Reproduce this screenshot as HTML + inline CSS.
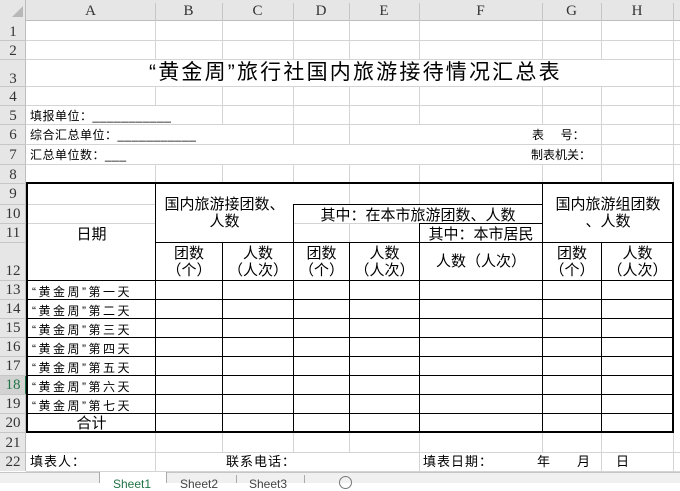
<!DOCTYPE html>
<html><head><meta charset="utf-8"><style>
*{margin:0;padding:0;box-sizing:border-box}
body{width:680px;height:483px;overflow:hidden;background:#fff;position:relative;font-family:"Liberation Sans","Noto Sans CJK SC",sans-serif;color:#000}
div{position:absolute}
.g{background:#d4d4d4}
.k{background:#000}
.t{font-size:12px;line-height:14px;white-space:nowrap}
.rh{left:0;width:26px;text-align:center;font-family:"Liberation Serif","Noto Serif CJK SC",serif;font-size:15px;color:#333}
.ch{top:0;height:21px;text-align:center;font-family:"Liberation Serif",serif;font-size:15px;line-height:22px;color:#333}
.b14{font-size:15px;line-height:17px;white-space:nowrap;text-align:center}
</style></head><body>
<div style="left:0;top:0;width:680px;height:21px;background:#e6e6e6;border-bottom:1px solid #bdbdbd"></div>
<div style="left:0;top:0;width:26px;height:471px;background:#e6e6e6;border-right:1px solid #bdbdbd"></div>
<div style="left:12px;top:6px;width:0;height:0;border-left:11px solid transparent;border-bottom:11px solid #b8b8b8"></div>
<div class="ch" style="left:26px;width:129px">A</div>
<div class="ch" style="left:155px;width:67px">B</div>
<div class="ch" style="left:222px;width:71px">C</div>
<div class="ch" style="left:293px;width:56px">D</div>
<div class="ch" style="left:349px;width:70px">E</div>
<div class="ch" style="left:419px;width:123px">F</div>
<div class="ch" style="left:542px;width:59px">G</div>
<div class="ch" style="left:601px;width:72px">H</div>
<div style="left:155px;top:3px;width:1px;height:18px;background:#c6c6c6"></div>
<div style="left:222px;top:3px;width:1px;height:18px;background:#c6c6c6"></div>
<div style="left:293px;top:3px;width:1px;height:18px;background:#c6c6c6"></div>
<div style="left:349px;top:3px;width:1px;height:18px;background:#c6c6c6"></div>
<div style="left:419px;top:3px;width:1px;height:18px;background:#c6c6c6"></div>
<div style="left:542px;top:3px;width:1px;height:18px;background:#c6c6c6"></div>
<div style="left:601px;top:3px;width:1px;height:18px;background:#c6c6c6"></div>
<div style="left:673px;top:3px;width:1px;height:18px;background:#c6c6c6"></div>
<div class="rh" style="top:22px;line-height:20px">1</div>
<div class="rh" style="top:41px;line-height:20px">2</div>
<div class="rh" style="top:69px;line-height:20px">3</div>
<div class="rh" style="top:87px;line-height:20px">4</div>
<div class="rh" style="top:106px;line-height:20px">5</div>
<div class="rh" style="top:125px;line-height:20px">6</div>
<div class="rh" style="top:145px;line-height:20px">7</div>
<div class="rh" style="top:165px;line-height:20px">8</div>
<div class="rh" style="top:184px;line-height:20px">9</div>
<div class="rh" style="top:204px;line-height:20px">10</div>
<div class="rh" style="top:223px;line-height:20px">11</div>
<div class="rh" style="top:261px;line-height:20px">12</div>
<div class="rh" style="top:280px;line-height:20px">13</div>
<div class="rh" style="top:299px;line-height:20px">14</div>
<div class="rh" style="top:318px;line-height:20px">15</div>
<div class="rh" style="top:337px;line-height:20px">16</div>
<div class="rh" style="top:356px;line-height:20px">17</div>
<div class="rh" style="top:375px;line-height:20px;color:#217346;background:#d2d2d2">18</div>
<div style="left:25px;top:376px;width:2px;height:18px;background:#217346"></div>
<div class="rh" style="top:394px;line-height:20px">19</div>
<div class="rh" style="top:413px;line-height:20px">20</div>
<div class="rh" style="top:433px;line-height:20px">21</div>
<div class="rh" style="top:452px;line-height:20px">22</div>
<div style="left:0;top:40px;width:26px;height:1px;background:#c6c6c6"></div>
<div style="left:0;top:59px;width:26px;height:1px;background:#c6c6c6"></div>
<div style="left:0;top:86px;width:26px;height:1px;background:#c6c6c6"></div>
<div style="left:0;top:105px;width:26px;height:1px;background:#c6c6c6"></div>
<div style="left:0;top:124px;width:26px;height:1px;background:#c6c6c6"></div>
<div style="left:0;top:144px;width:26px;height:1px;background:#c6c6c6"></div>
<div style="left:0;top:164px;width:26px;height:1px;background:#c6c6c6"></div>
<div style="left:0;top:183px;width:26px;height:1px;background:#c6c6c6"></div>
<div style="left:0;top:204px;width:26px;height:1px;background:#c6c6c6"></div>
<div style="left:0;top:223px;width:26px;height:1px;background:#c6c6c6"></div>
<div style="left:0;top:242px;width:26px;height:1px;background:#c6c6c6"></div>
<div style="left:0;top:280px;width:26px;height:1px;background:#c6c6c6"></div>
<div style="left:0;top:299px;width:26px;height:1px;background:#c6c6c6"></div>
<div style="left:0;top:318px;width:26px;height:1px;background:#c6c6c6"></div>
<div style="left:0;top:337px;width:26px;height:1px;background:#c6c6c6"></div>
<div style="left:0;top:356px;width:26px;height:1px;background:#c6c6c6"></div>
<div style="left:0;top:375px;width:26px;height:1px;background:#c6c6c6"></div>
<div style="left:0;top:394px;width:26px;height:1px;background:#c6c6c6"></div>
<div style="left:0;top:413px;width:26px;height:1px;background:#c6c6c6"></div>
<div style="left:0;top:432px;width:26px;height:1px;background:#c6c6c6"></div>
<div style="left:0;top:452px;width:26px;height:1px;background:#c6c6c6"></div>

<div class="g" style="left:26px;top:40px;width:654px;height:1px"></div>
<div class="g" style="left:26px;top:59px;width:654px;height:1px"></div>
<div class="g" style="left:26px;top:86px;width:654px;height:1px"></div>
<div class="g" style="left:26px;top:105px;width:654px;height:1px"></div>
<div class="g" style="left:26px;top:124px;width:654px;height:1px"></div>
<div class="g" style="left:26px;top:144px;width:654px;height:1px"></div>
<div class="g" style="left:26px;top:164px;width:654px;height:1px"></div>
<div class="g" style="left:155px;top:21px;width:1px;height:39px"></div>
<div class="g" style="left:222px;top:21px;width:1px;height:39px"></div>
<div class="g" style="left:293px;top:21px;width:1px;height:39px"></div>
<div class="g" style="left:349px;top:21px;width:1px;height:39px"></div>
<div class="g" style="left:419px;top:21px;width:1px;height:39px"></div>
<div class="g" style="left:542px;top:21px;width:1px;height:39px"></div>
<div class="g" style="left:601px;top:21px;width:1px;height:39px"></div>
<div class="g" style="left:673px;top:21px;width:1px;height:162px"></div>
<div class="g" style="left:155px;top:86px;width:1px;height:19px"></div>
<div class="g" style="left:222px;top:86px;width:1px;height:38px"></div>
<div class="g" style="left:293px;top:86px;width:1px;height:58px"></div>
<div class="g" style="left:349px;top:86px;width:1px;height:58px"></div>
<div class="g" style="left:419px;top:86px;width:1px;height:38px"></div>
<div class="g" style="left:542px;top:86px;width:1px;height:38px"></div>
<div class="g" style="left:601px;top:86px;width:1px;height:97px"></div>
<div class="g" style="left:155px;top:164px;width:1px;height:19px"></div>
<div class="g" style="left:222px;top:164px;width:1px;height:19px"></div>
<div class="g" style="left:293px;top:164px;width:1px;height:19px"></div>
<div class="g" style="left:349px;top:164px;width:1px;height:19px"></div>
<div class="g" style="left:419px;top:164px;width:1px;height:19px"></div>
<div class="g" style="left:542px;top:164px;width:1px;height:19px"></div>
<div class="g" style="left:26px;top:452px;width:654px;height:1px"></div>
<div class="g" style="left:26px;top:471px;width:654px;height:1px"></div>
<div class="g" style="left:155px;top:432px;width:1px;height:40px"></div>
<div class="g" style="left:222px;top:432px;width:1px;height:20px"></div>
<div class="g" style="left:293px;top:432px;width:1px;height:20px"></div>
<div class="g" style="left:349px;top:432px;width:1px;height:20px"></div>
<div class="g" style="left:419px;top:432px;width:1px;height:40px"></div>
<div class="g" style="left:542px;top:432px;width:1px;height:20px"></div>
<div class="g" style="left:601px;top:432px;width:1px;height:40px"></div>
<div class="g" style="left:673px;top:432px;width:1px;height:40px"></div>

<div class="g" style="left:26px;top:204px;width:129px;height:1px"></div>
<div class="g" style="left:26px;top:223px;width:129px;height:1px"></div>
<div class="g" style="left:349px;top:184px;width:1px;height:20px"></div>
<div class="g" style="left:419px;top:184px;width:1px;height:20px"></div>
<div class="g" style="left:293px;top:223px;width:126px;height:1px"></div>
<div class="g" style="left:349px;top:223px;width:1px;height:19px"></div>

<div class="k" style="left:26px;top:182px;width:648px;height:2px"></div>
<div class="k" style="left:26px;top:431px;width:648px;height:2px"></div>
<div class="k" style="left:26px;top:182px;width:2px;height:251px"></div>
<div class="k" style="left:672px;top:182px;width:2px;height:251px"></div>
<div class="k" style="left:155px;top:182px;width:1px;height:250px"></div>
<div class="k" style="left:293px;top:204px;width:249px;height:1px"></div>
<div class="k" style="left:419px;top:223px;width:123px;height:1px"></div>
<div class="k" style="left:155px;top:242px;width:518px;height:1px"></div>
<div class="k" style="left:293px;top:204px;width:1px;height:228px"></div>
<div class="k" style="left:419px;top:223px;width:1px;height:209px"></div>
<div class="k" style="left:542px;top:182px;width:1px;height:250px"></div>
<div class="k" style="left:222px;top:242px;width:1px;height:190px"></div>
<div class="k" style="left:349px;top:242px;width:1px;height:190px"></div>
<div class="k" style="left:601px;top:242px;width:1px;height:190px"></div>
<div class="k" style="left:26px;top:280px;width:647px;height:1px"></div>
<div class="k" style="left:26px;top:299px;width:647px;height:1px"></div>
<div class="k" style="left:26px;top:318px;width:647px;height:1px"></div>
<div class="k" style="left:26px;top:337px;width:647px;height:1px"></div>
<div class="k" style="left:26px;top:356px;width:647px;height:1px"></div>
<div class="k" style="left:26px;top:375px;width:647px;height:1px"></div>
<div class="k" style="left:26px;top:394px;width:647px;height:1px"></div>
<div class="k" style="left:26px;top:413px;width:647px;height:1px"></div>

<div style="left:149px;top:61px;font-size:21px;line-height:24px;letter-spacing:2.2px;white-space:nowrap">“黄金周”旅行社国内旅游接待情况汇总表</div>
<div class="t" style="left:30px;top:109px;letter-spacing:0.5px">填报单位：___________</div>
<div class="t" style="left:30px;top:128px;letter-spacing:0.5px">综合汇总单位：___________</div>
<div class="t" style="left:30px;top:148px;letter-spacing:0.5px">汇总单位数：___</div>
<div class="t" style="left:532px;top:128px">表&nbsp;&nbsp;&nbsp;&nbsp;&nbsp;号：</div>
<div class="t" style="left:531px;top:148px">制表机关：</div>

<div class="b14" style="left:28px;top:226px;width:127px">日期</div>
<div class="b14" style="left:156px;top:196px;width:137px">国内旅游接团数、<br>人数</div>
<div class="b14" style="left:294px;top:207px;width:248px">其中：在本市旅游团数、人数</div>
<div class="b14" style="left:420px;top:226px;width:122px">其中：本市居民</div>
<div class="b14" style="left:543px;top:196px;width:130px">国内旅游组团数<br>、人数</div>
<div class="b14" style="left:156px;top:245px;width:66px">团数<br>（个）</div>
<div class="b14" style="left:223px;top:245px;width:70px">人数<br>（人次）</div>
<div class="b14" style="left:294px;top:245px;width:55px">团数<br>（个）</div>
<div class="b14" style="left:350px;top:245px;width:69px">人数<br>（人次）</div>
<div class="b14" style="left:420px;top:253px;width:122px">人数（人次）</div>
<div class="b14" style="left:543px;top:245px;width:58px">团数<br>（个）</div>
<div class="b14" style="left:602px;top:245px;width:71px">人数<br>（人次）</div>

<div class="t" style="left:32px;top:285px;letter-spacing:2.5px">“黄金周”第一天</div>
<div class="t" style="left:32px;top:304px;letter-spacing:2.5px">“黄金周”第二天</div>
<div class="t" style="left:32px;top:323px;letter-spacing:2.5px">“黄金周”第三天</div>
<div class="t" style="left:32px;top:342px;letter-spacing:2.5px">“黄金周”第四天</div>
<div class="t" style="left:32px;top:361px;letter-spacing:2.5px">“黄金周”第五天</div>
<div class="t" style="left:32px;top:380px;letter-spacing:2.5px">“黄金周”第六天</div>
<div class="t" style="left:32px;top:399px;letter-spacing:2.5px">“黄金周”第七天</div>
<div class="b14" style="left:28px;top:415px;width:127px">合计</div>

<div class="t" style="left:30px;top:455px;font-size:13px;letter-spacing:1px">填表人：</div>
<div class="t" style="left:226px;top:455px;font-size:13px;letter-spacing:1px">联系电话：</div>
<div class="t" style="left:423px;top:455px;font-size:13px;letter-spacing:1px">填表日期：</div>
<div class="t" style="left:537px;top:455px;font-size:13px">年</div>
<div class="t" style="left:577px;top:455px;font-size:13px">月</div>
<div class="t" style="left:616px;top:455px;font-size:13px">日</div>

<div style="left:0;top:472px;width:680px;height:11px;background:#f0f0f0;border-top:1px solid #c6c6c6"></div>
<div style="left:99px;top:472px;width:68px;height:11px;background:#fff;border-left:1px solid #aaa;border-right:1px solid #aaa"></div>
<div class="t" style="left:113px;top:477px;color:#217346">Sheet1</div>
<div class="t" style="left:180px;top:477px;color:#444">Sheet2</div>
<div style="left:236px;top:475px;width:1px;height:8px;background:#aaa"></div>
<div class="t" style="left:249px;top:477px;color:#444">Sheet3</div>
<div style="left:304px;top:475px;width:1px;height:8px;background:#aaa"></div>
<div style="left:339px;top:476px;width:13px;height:13px;border:1px solid #777;border-radius:50%"></div>
</body></html>
